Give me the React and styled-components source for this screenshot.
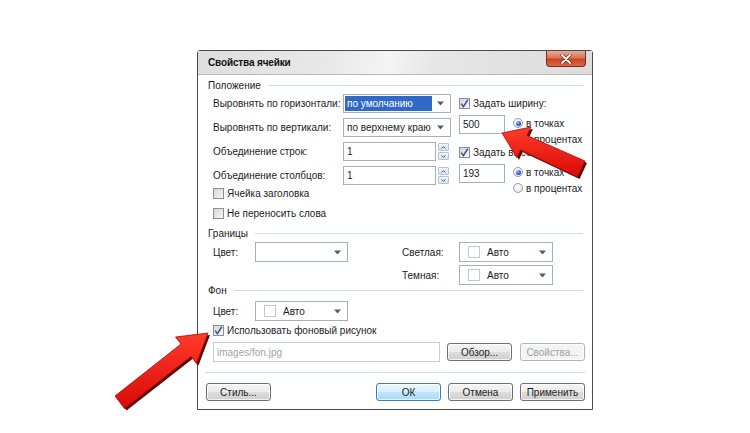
import React from 'react';
import styled, { createGlobalStyle, css } from 'styled-components';

const Global = createGlobalStyle`
  html, body { margin: 0; padding: 0; background: #fff; }
  body {
    font-family: "Liberation Sans", Arial, sans-serif;
    font-size: 10px;
    color: #1c1c1c;
  }
`;

const Page = styled.div`
  position: relative;
  width: 750px;
  height: 433px;
  box-sizing: border-box;
  padding: 50px 0 0 197px;
  overflow: hidden;
`;

const Dialog = styled.div`
  width: 396px;
  height: 360px;
  box-sizing: border-box;
  border: 1px solid #4a4a4a;
  border-radius: 3px 3px 0 0;
  background: #fff;
  display: flex;
  flex-direction: column;
`;

const TitleBar = styled.div`
  height: 24px;
  box-sizing: border-box;
  border-bottom: 1px solid #b4b8bd;
  background: linear-gradient(100deg, #dedede 0%, #e9e9e9 35%, #f4f4f4 48%, #e6e6e6 60%, #dcdcdc 100%);
  display: flex;
  align-items: flex-start;
  justify-content: space-between;
  padding: 0 6px 0 10px;
`;

const Title = styled.div`
  font-weight: bold;
  font-size: 10px;
  letter-spacing: -0.15px;
  line-height: 23px;
  color: #111;
`;

const CloseBtn = styled.div`
  width: 40px;
  height: 16px;
  box-sizing: border-box;
  border: 1px solid #7a2d1b;
  border-top: none;
  border-radius: 0 0 4px 4px;
  background: linear-gradient(#e9aa96 0%, #dc7658 45%, #c74324 55%, #d8694a 100%);
  display: flex;
  align-items: center;
  justify-content: center;
`;

const Body = styled.div`
  flex: 1;
  display: flex;
  flex-direction: column;
  padding: 4px 7px 0 10px;
`;

const GroupHeader = styled.div`
  height: 12px;
  display: flex;
  align-items: center;
  gap: 7px;
  margin-top: ${p => p.$mt || 0}px;
  color: #1c1c1c;
  &::after {
    content: '';
    flex: 1;
    height: 1px;
    background: #d3dbe2;
    margin-right: 2px;
  }
`;

const Section = styled.div`
  display: flex;
  margin: ${p => p.$mt || 0}px 0 0 5px;
`;

const Column = styled.div`
  display: flex;
  flex-direction: column;
  width: ${p => (p.$w ? `${p.$w}px` : 'auto')};
`;

const FieldRow = styled.div`
  display: grid;
  grid-template-columns: ${p => p.$label}px auto;
  align-items: center;
  height: ${p => p.$h || 19}px;
  margin-bottom: ${p => p.$mb ?? 5}px;
`;

const Label = styled.span`
  white-space: nowrap;
`;

const Select = styled.div`
  box-sizing: border-box;
  width: ${p => p.$w}px;
  height: ${p => p.$h || 19}px;
  border: 1px solid #a7b0ba;
  background: #fff;
  display: flex;
  align-items: stretch;
  padding: 1px;
`;

const SelectValue = styled.div`
  flex: 1;
  display: flex;
  align-items: center;
  gap: 7px;
  padding-left: ${p => (p.$swatch ? 7 : 2)}px;
  white-space: nowrap;
  overflow: hidden;
  ${p => p.$selected && css`
    background: #3169c6;
    color: #fff;
  `}
`;

const DropBtn = styled.div`
  width: 17px;
  display: flex;
  align-items: center;
  justify-content: center;
`;

const Swatch = styled.span`
  width: 10px;
  height: 10px;
  border: 1px solid #c4c8cc;
  background: #fff;
  flex: none;
`;

const TextBox = styled.div`
  box-sizing: border-box;
  width: ${p => p.$w}px;
  height: ${p => p.$h || 19}px;
  border: 1px solid ${p => (p.$disabled ? '#c5ccd3' : '#a7b0ba')};
  background: #fff;
  display: flex;
  align-items: center;
  padding-left: 3px;
  color: ${p => (p.$disabled ? '#a3a3a3' : '#1c1c1c')};
  margin-top: ${p => p.$mt || 0}px;
  flex: none;
`;

const SpinWrap = styled.div`
  display: flex;
  align-items: center;
  gap: 2px;
`;

const SpinStack = styled.div`
  display: flex;
  flex-direction: column;
  gap: 1px;
`;

const SpinBtn = styled.div`
  width: 11px;
  height: 8px;
  box-sizing: border-box;
  border: 1px solid #b5c3d3;
  border-radius: 1px;
  background: linear-gradient(#f6f9fd, #dbe5f1);
  display: flex;
  align-items: center;
  justify-content: center;
`;

const CheckRow = styled.label`
  display: flex;
  align-items: center;
  gap: 3px;
  height: ${p => p.$h || 19}px;
  margin-top: ${p => p.$mt || 0}px;
  white-space: nowrap;
`;

const Box = styled.span`
  width: 11px;
  height: 11px;
  box-sizing: border-box;
  border: 1px solid #8e8f8f;
  background: linear-gradient(135deg, #d6d6d6, #f6f6f6);
  display: flex;
  align-items: center;
  justify-content: center;
  flex: none;
`;

const SizeRow = styled.div`
  display: flex;
  align-items: flex-start;
  gap: 8px;
  margin-top: ${p => p.$mt || 0}px;
`;

const RadioStack = styled.div`
  display: flex;
  flex-direction: column;
`;

const RadioRow = styled.div`
  display: flex;
  align-items: center;
  gap: 3px;
  height: 16px;
  white-space: nowrap;
`;

const RadioDot = styled.span`
  width: 10px;
  height: 10px;
  box-sizing: border-box;
  border-radius: 50%;
  border: 1px solid #949ea8;
  background: radial-gradient(circle at 40% 35%, #ffffff, #dcdfe3);
  display: flex;
  align-items: center;
  justify-content: center;
  flex: none;
  ${p => p.$on && css`
    &::after {
      content: '';
      width: 5px;
      height: 5px;
      border-radius: 50%;
      background: radial-gradient(circle at 35% 30%, #9fb6ff, #1d3fc4 70%);
    }
  `}
`;

const BorderGrid = styled.div`
  display: flex;
  margin: ${p => p.$mt || 0}px 0 0 5px;
`;

const InlineField = styled.div`
  display: grid;
  grid-template-columns: ${p => p.$label}px auto;
  align-items: center;
  height: ${p => p.$h || 20}px;
`;

const RightFields = styled.div`
  display: flex;
  flex-direction: column;
  gap: 3px;
  margin-left: 54px;
`;

const PathRow = styled.div`
  display: flex;
  align-items: center;
  margin: 2px 0 0 5px;
  height: 20px;
`;

const Button = styled.div`
  width: 65px;
  height: 18px;
  box-sizing: border-box;
  border: 1px solid #707070;
  border-radius: 3px;
  background: linear-gradient(#f5f5f5 0%, #ebebeb 50%, #dddddd 50%, #cfcfcf 100%);
  box-shadow: inset 0 0 0 1px rgba(255, 255, 255, 0.75);
  display: flex;
  align-items: center;
  justify-content: center;
  color: #1c1c1c;
  margin-left: ${p => p.$ml || 0}px;
  flex: none;
  ${p => p.$primary && css`
    border-color: #3c7fb1;
    background: linear-gradient(#eaf6fd 0%, #d9f0fc 50%, #bee6fd 50%, #a7d9f5 100%);
  `}
  ${p => p.$disabled && css`
    border-color: #b1b6ba;
    background: #f4f4f4;
    color: #a3a3a3;
  `}
`;

const Separator = styled.div`
  height: 1px;
  background: #d3dbe2;
  margin: 10px 0 0 -3px;
`;

const ButtonBar = styled.div`
  display: flex;
  justify-content: space-between;
  margin: 10px 0 0 -2px;
`;

const ButtonGroup = styled.div`
  display: flex;
  gap: 7px;
`;

const Overlay = styled.svg`
  position: absolute;
  left: 0;
  top: 0;
  width: 750px;
  height: 433px;
  pointer-events: none;
`;

const Arrow = () => (
  <svg width="7" height="5" viewBox="0 0 7 5">
    <polygon points="0,0.5 7,0.5 3.5,4.5" fill="#4d5f78" />
  </svg>
);

const Tick = () => (
  <svg width="9" height="9" viewBox="0 0 9 9">
    <path d="M1.2 4.6 L3.4 7.6 L7.8 0.8" fill="none" stroke="#3f58a4" strokeWidth="1.6" />
  </svg>
);

const Check = ({ on, children, h, mt }) => (
  <CheckRow $h={h} $mt={mt}>
    <Box>{on && <Tick />}</Box>
    <span>{children}</span>
  </CheckRow>
);

const Radio = ({ on, children }) => (
  <RadioRow>
    <RadioDot $on={on} />
    <span>{children}</span>
  </RadioRow>
);

const Spinner = ({ value }) => (
  <SpinWrap>
    <TextBox $w={93}>{value}</TextBox>
    <SpinStack>
      <SpinBtn>
        <svg width="5" height="3" viewBox="0 0 5 3"><path d="M0.5 2.6 L2.5 0.6 L4.5 2.6" fill="none" stroke="#2c4f8c" strokeWidth="1" /></svg>
      </SpinBtn>
      <SpinBtn>
        <svg width="5" height="3" viewBox="0 0 5 3"><path d="M0.5 0.4 L2.5 2.4 L4.5 0.4" fill="none" stroke="#2c4f8c" strokeWidth="1" /></svg>
      </SpinBtn>
    </SpinStack>
  </SpinWrap>
);

const ColorSelect = ({ w, value, h }) => (
  <Select $w={w} $h={h || 20}>
    <SelectValue $swatch={!!value}>
      {value && <Swatch />}
      {value && <span>{value}</span>}
    </SelectValue>
    <DropBtn><Arrow /></DropBtn>
  </Select>
);

const arrow1 = '502,133 531,127 527,135.5 585,161 577.5,177 520.5,150 517,158';
const arrow2 = '208,333 175.5,337 181,344 115,396 124.5,408.5 191,356.5 196.5,363.5';

export default function App() {
  return (
    <>
      <Global />
      <Page>
        <Dialog>
          <TitleBar>
            <Title>Свойства ячейки</Title>
            <CloseBtn>
              <svg width="12" height="10" viewBox="0 0 12 10">
                <path d="M2 1 L10 9 M10 1 L2 9" stroke="#6b2a1a" strokeWidth="3.2" strokeLinecap="round" />
                <path d="M2 1 L10 9 M10 1 L2 9" stroke="#fff" strokeWidth="1.8" strokeLinecap="round" />
              </svg>
            </CloseBtn>
          </TitleBar>
          <Body>
            <GroupHeader>Положение</GroupHeader>
            <Section $mt={3}>
              <Column $w={246}>
                <FieldRow $label={130}>
                  <Label>Выровнять по горизонтали:</Label>
                  <Select $w={108}>
                    <SelectValue $selected>по умолчанию</SelectValue>
                    <DropBtn><Arrow /></DropBtn>
                  </Select>
                </FieldRow>
                <FieldRow $label={130}>
                  <Label>Выровнять по вертикали:</Label>
                  <Select $w={108}>
                    <SelectValue>по верхнему краю</SelectValue>
                    <DropBtn><Arrow /></DropBtn>
                  </Select>
                </FieldRow>
                <FieldRow $label={130}>
                  <Label>Объединение строк:</Label>
                  <Spinner value="1" />
                </FieldRow>
                <FieldRow $label={130} $mb={0}>
                  <Label>Объединение столбцов:</Label>
                  <Spinner value="1" />
                </FieldRow>
                <Check h={19} mt={-1}>Ячейка заголовка</Check>
                <Check h={19} mt={1}>Не переносить слова</Check>
              </Column>
              <Column>
                <Check on>Задать ширину:</Check>
                <SizeRow $mt={2}>
                  <TextBox $w={46}>500</TextBox>
                  <RadioStack>
                    <Radio on>в точках</Radio>
                    <Radio>в процентах</Radio>
                  </RadioStack>
                </SizeRow>
                <Check on mt={-4}>Задать высоту:</Check>
                <SizeRow $mt={2}>
                  <TextBox $w={46}>193</TextBox>
                  <RadioStack>
                    <Radio on>в точках</Radio>
                    <Radio>в процентах</Radio>
                  </RadioStack>
                </SizeRow>
              </Column>
            </Section>

            <GroupHeader $mt={4}>Границы</GroupHeader>
            <BorderGrid $mt={3}>
              <InlineField $label={42}>
                <Label>Цвет:</Label>
                <ColorSelect w={93} />
              </InlineField>
              <RightFields>
                <InlineField $label={57}>
                  <Label>Светлая:</Label>
                  <ColorSelect w={94} value="Авто" />
                </InlineField>
                <InlineField $label={57}>
                  <Label>Темная:</Label>
                  <ColorSelect w={94} value="Авто" />
                </InlineField>
              </RightFields>
            </BorderGrid>

            <GroupHeader $mt={-1}>Фон</GroupHeader>
            <BorderGrid $mt={5}>
              <InlineField $label={42}>
                <Label>Цвет:</Label>
                <ColorSelect w={93} value="Авто" />
              </InlineField>
            </BorderGrid>
            <Section>
              <Check on h={19}>Использовать фоновый рисунок</Check>
            </Section>
            <PathRow>
              <TextBox $w={227} $h={20} $disabled>images/fon.jpg</TextBox>
              <Button $ml={7}>Обзор...</Button>
              <Button $ml={8} $disabled>Свойства...</Button>
            </PathRow>
            <Separator />
            <ButtonBar>
              <Button>Стиль...</Button>
              <ButtonGroup>
                <Button $primary>ОК</Button>
                <Button>Отмена</Button>
                <Button>Применить</Button>
              </ButtonGroup>
            </ButtonBar>
          </Body>
        </Dialog>
        <Overlay viewBox="0 0 750 433">
          <defs>
            <linearGradient id="redg" x1="0" y1="0" x2="0" y2="1">
              <stop offset="0" stopColor="#ff3b2b" />
              <stop offset="1" stopColor="#d80a06" />
            </linearGradient>
          </defs>
          <polygon points={arrow1} fill="#5a0503" transform="translate(2,2)" />
          <polygon points={arrow1} fill="url(#redg)" stroke="#a30a05" strokeWidth="0.8" />
          <polygon points={arrow2} fill="#5a0503" transform="translate(2,2)" />
          <polygon points={arrow2} fill="url(#redg)" stroke="#a30a05" strokeWidth="0.8" />
        </Overlay>
      </Page>
    </>
  );
}
